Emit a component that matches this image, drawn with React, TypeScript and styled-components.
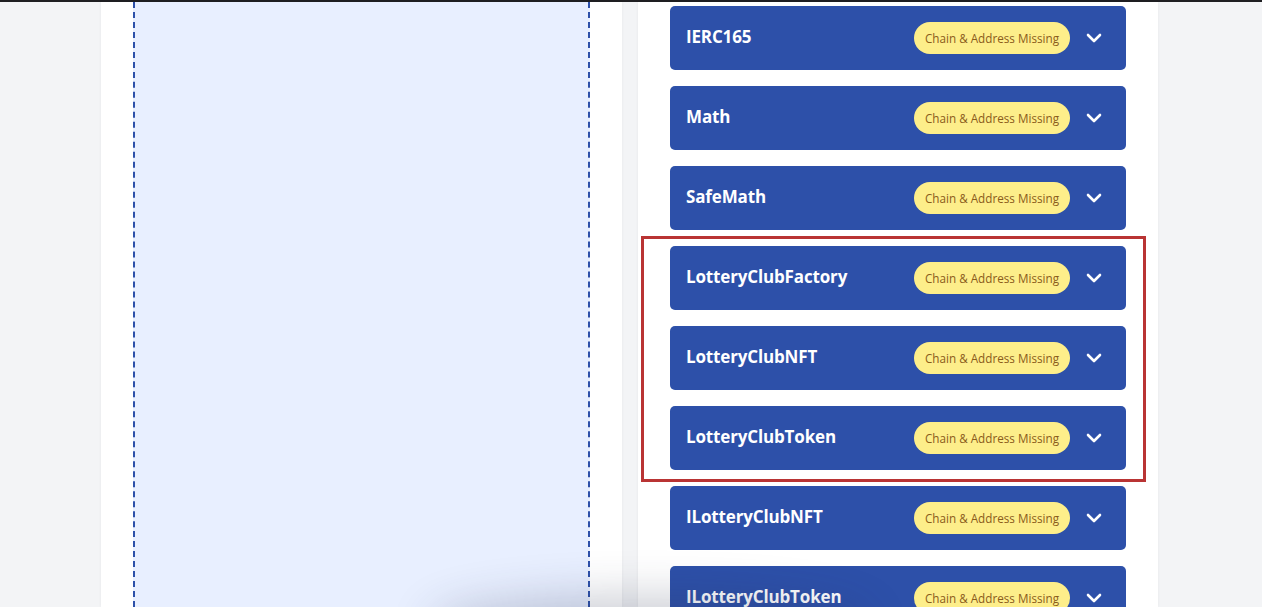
import React from "react";
import styled, { createGlobalStyle } from "styled-components";

const Global = createGlobalStyle`
  html, body { margin: 0; padding: 0; background: #f3f4f6; overflow: hidden; }
  body { font-family: "Open Sans", "Noto Sans", sans-serif; }
`;

const TopBar = styled.div`
  height: 2px;
  background: #1f1f22;
`;

const Main = styled.main`
  display: flex;
  gap: 16px;
  padding-left: 101px;
  height: 605px;
`;

const Panel = styled.section<{ $w: number }>`
  width: ${(p) => p.$w}px;
  background: #fff;
  box-sizing: border-box;
  padding: 0 32px;
  box-shadow: 0 0 3px rgba(0, 0, 0, 0.06);
`;

const DropZone = styled.div`
  height: 100%;
  background: #e8efff;
  border: 2px dashed #2d50a9;
  border-top: none;
  border-bottom: none;
  box-sizing: border-box;
`;

const List = styled.div`
  position: relative;
  display: flex;
  flex-direction: column;
  gap: 16px;
  padding-top: 4px;
`;

const Card = styled.div`
  height: 64px;
  background: #2d50a9;
  border-radius: 5px;
  display: flex;
  align-items: center;
  padding: 0 20px 0 16px;
  color: #fff;
`;

const Title = styled.div`
  flex: 1;
  font-size: 17px;
  font-weight: 700;
  letter-spacing: -0.15px;
  padding-bottom: 3px;
`;

const Badge = styled.span`
  height: 32px;
  width: 156px;
  border-radius: 16px;
  background: #fdee8a;
  color: #8a5b1a;
  font-size: 11.7px;
  display: flex;
  align-items: center;
  justify-content: center;
  white-space: nowrap;
  padding-bottom: 1px;
  box-sizing: border-box;
`;

const Chevron = styled.span`
  width: 24px;
  height: 24px;
  margin-left: 12px;
  display: flex;
  align-items: center;
  justify-content: center;
`;

const Highlight = styled.div`
  position: absolute;
  left: -29px;
  top: 234px;
  width: 505px;
  height: 246px;
  border: 3px solid #b93434;
  box-sizing: border-box;
  pointer-events: none;
`;

const BottomShade = styled.div`
  position: fixed;
  left: 450px;
  width: 400px;
  top: 616px;
  height: 24px;
  border-radius: 50%;
  box-shadow: 0 0 46px 20px rgba(40, 50, 80, 0.24);
`;

const names = [
  "IERC165",
  "Math",
  "SafeMath",
  "LotteryClubFactory",
  "LotteryClubNFT",
  "LotteryClubToken",
  "ILotteryClubNFT",
  "ILotteryClubToken",
];

const ChevronIcon = () => (
  <svg width="16" height="10" viewBox="0 0 16 10" fill="none">
    <path d="M2 2l6 6 6-6" stroke="#fff" strokeWidth="2.6" strokeLinecap="round" strokeLinejoin="round" />
  </svg>
);

export default function App() {
  return (
    <>
      <Global />
      <TopBar />
      <Main>
        <Panel $w={521}>
          <DropZone />
        </Panel>
        <Panel $w={520}>
          <List>
            {names.map((n) => (
              <Card key={n}>
                <Title>{n}</Title>
                <Badge>Chain &amp; Address Missing</Badge>
                <Chevron>
                  <ChevronIcon />
                </Chevron>
              </Card>
            ))}
            <Highlight />
          </List>
        </Panel>
      </Main>
      <BottomShade />
    </>
  );
}
